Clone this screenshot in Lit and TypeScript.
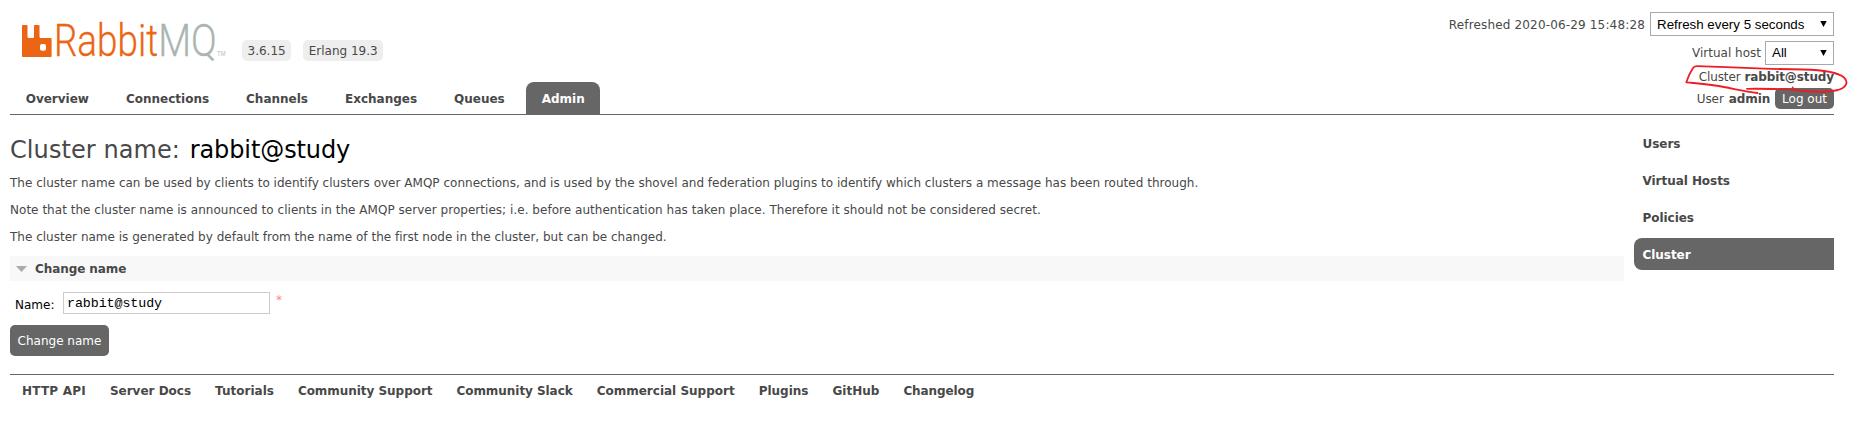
import { LitElement, html, css } from "lit";
import { customElement } from "lit/decorators.js";
import { classMap } from "lit/directives/class-map.js";

@customElement("rabbit-logo")
class RabbitLogo extends LitElement {
  static styles = css`
    :host { display: block; width: 206px; height: 40px; }
    svg { display: block; overflow: visible; }
    .word { font: 300 44px Roboto, sans-serif; fill: #eb6614; stroke: #eb6614; stroke-width: 0.3; }
    .mark { fill: #eb6614; }
    .mq { fill: #aab5b0; stroke: #aab5b0; }
    .tm { font: 7px "Liberation Sans", sans-serif; fill: #b4bdb9; }
  `;
  render() {
    return html`
      <svg width="206" height="40" viewBox="22 20 206 40">
        <path class="mark" fill-rule="evenodd"
          d="M22.800 25H26.700Q27.500 25 27.500 25.800V36.500Q27.500 38 29 38H32.500Q34 38 34 36.500V25.800Q34 25 34.800 25H38.700Q39.500 25 39.500 25.800V36.500Q39.500 38 41 38H50.800Q51.600 38 51.600 38.800V56.200Q51.600 57 50.800 57H22.800Q22 57 22 56.200V25.800Q22 25 22.800 25ZM42 44Q40 44 40 46V48.700Q40 50.700 42 50.700H44Q46 50.700 46 48.700V46Q46 44 44 44Z" />
        <text class="word" x="54" y="56" textLength="104" lengthAdjust="spacingAndGlyphs">Rabbit</text>
        <text class="word mq" x="158.300" y="56" textLength="58.500" lengthAdjust="spacingAndGlyphs">MQ</text>
        <text class="tm" x="217" y="56" textLength="8.500" lengthAdjust="spacingAndGlyphs">TM</text>
      </svg>`;
  }
}

@customElement("app-root")
class AppRoot extends LitElement {
  static styles = css`
    :host {
      display: block; height: 423px; padding: 0 30px 0 10px; box-sizing: border-box;
      background: #fff; color: #484848; overflow: hidden; position: relative;
      font: 12px/14px "DejaVu Sans", Verdana, sans-serif;
    }
    header { display: flex; justify-content: space-between; height: 114px; border-bottom: 1px solid #666; }
    .brand { display: flex; padding: 20px 0 0 12px; height: 62px; box-sizing: border-box; }
    .tag { height: 21px; line-height: 22px; margin-top: 20px; padding: 0 5.500px; background: #eee; border-radius: 5px; }
    .version { margin-left: 14px; }
    .erlang { margin-left: 12px; }
    .tabs { display: flex; gap: 5.600px; padding-top: 20px; font-weight: bold; }
    .tab { height: 32px; line-height: 34px; padding: 0 15.700px; border-radius: 8px 8px 0 0; }
    .on { background: #666; color: #fff; }

    .status { display: flex; flex-direction: column; align-items: flex-end; padding-top: 12px; }
    .row { display: flex; align-items: center; gap: 4px; }
    .refresh { height: 24px; gap: 5px; }
    .time { letter-spacing: 0.160px; padding-top: 1px; }
    .vhost { height: 25px; margin-top: 4px; }
    .cluster { height: 22px; padding-top: 1px; box-sizing: border-box; letter-spacing: -0.120px; }
    .user { height: 21px; margin-top: 1px; gap: 5px; letter-spacing: -0.100px; }
    .select {
      display: flex; align-items: center; justify-content: space-between; height: 24px; box-sizing: border-box;
      border: 1px solid #a9a9a9; padding: 0 6px 0 6px; color: #000;
      font: 13.330px "Liberation Sans", Arial, sans-serif;
    }
    .wide { width: 184px; }
    .narrow { width: 69px; }
    .arrow { width: 7px; height: 6px; display: block; }
    .logout { height: 21px; line-height: 22px; padding: 0 7px; border-radius: 5px; background: #666; color: #fff; letter-spacing: 0; }

    main { display: flex; gap: 10px; height: 259px; }
    .content { width: 1614px; }
    h1 { margin: 21px 0 12px; font-size: 24px; line-height: 28px; font-weight: normal; letter-spacing: 0.080px; }
    h1 b { font-weight: normal; color: #000; margin-left: 2px; letter-spacing: -0.100px; }
    p { margin: 0 0 13px; height: 14px; letter-spacing: 0.016px; white-space: nowrap; }
    p:nth-of-type(2) { letter-spacing: 0.032px; }
    p:nth-of-type(3) { letter-spacing: 0.010px; }
    .section {
      display: flex; align-items: center; gap: 8px; height: 25px; margin-top: -1px; padding-left: 6px;
      background: #f8f8f8; font-weight: bold; letter-spacing: -0.080px;
    }
    .tri { display: block; width: 11px; height: 6px; }
    .field { display: flex; margin-top: 11px; padding-left: 5px; color: #000; }
    .field label { width: 48px; padding-top: 6px; }
    .input {
      width: 207px; height: 22px; line-height: 21px; box-sizing: border-box; border: 1px solid #ccc; padding-left: 3px;
      font-family: "Liberation Mono", "Courier New", monospace; font-size: 13.330px; letter-spacing: -0.080px;
    }
    .req { color: #f88; margin: 1px 0 0 6px; }
    .button {
      display: inline-block; margin-top: 11px; height: 31px; line-height: 32px; padding: 0 7.600px;
      background: #666; color: #fff; border-radius: 5px;
    }

    .side { width: 200px; padding-top: 12px; font-weight: bold; letter-spacing: -0.050px; }
    .item { height: 32px; line-height: 34px; margin-bottom: 5px; padding-left: 8.500px; border-radius: 8px 0 0 8px; }

    footer { display: flex; gap: 24px; border-top: 1px solid #666; padding: 9px 0 0 12px; font-weight: bold; }
    footer a:nth-child(1) { letter-spacing: 0.210px; }
    footer a:nth-child(4) { letter-spacing: -0.040px; }
    footer a:nth-child(5) { letter-spacing: -0.050px; }
    footer a:nth-child(9) { letter-spacing: -0.100px; }

    .scribble { position: absolute; left: 1680px; top: 60px; fill: none; stroke: #ee1c25; stroke-width: 1.800; stroke-linecap: round; stroke-linejoin: round; }
  `;

  private tabs = ["Overview", "Connections", "Channels", "Exchanges", "Queues", "Admin"];
  private side = ["Users", "Virtual Hosts", "Policies", "Cluster"];
  private links = ["HTTP API", "Server Docs", "Tutorials", "Community Support", "Community Slack",
    "Commercial Support", "Plugins", "GitHub", "Changelog"];

  private arrow() {
    return html`<svg class="arrow" viewBox="0 0 7 6"><path d="M0.300 0H6.700L3.500 6Z" /></svg>`;
  }

  render() {
    return html`
      <header>
        <div>
          <div class="brand">
            <rabbit-logo></rabbit-logo>
            <span class="tag version">3.6.15</span>
            <span class="tag erlang">Erlang 19.3</span>
          </div>
          <nav class="tabs">
            ${this.tabs.map((t) => html`<a class=${classMap({ tab: true, on: t === "Admin" })}>${t}</a>`)}
          </nav>
        </div>
        <div class="status">
          <div class="row refresh"><span class="time">Refreshed 2020-06-29 15:48:28</span>
            <span class="select wide">Refresh every 5 seconds ${this.arrow()}</span></div>
          <div class="row vhost"><span>Virtual host</span><span class="select narrow">All ${this.arrow()}</span></div>
          <div class="row cluster"><span>Cluster</span><b>rabbit@study</b></div>
          <div class="row user"><span>User</span><b>admin</b><span class="logout">Log out</span></div>
        </div>
      </header>
      <main>
        <div class="content">
          <h1>Cluster name: <b>rabbit@study</b></h1>
          <p>The cluster name can be used by clients to identify clusters over AMQP connections, and is used by the shovel and federation plugins to identify which clusters a message has been routed through.</p>
          <p>Note that the cluster name is announced to clients in the AMQP server properties; i.e. before authentication has taken place. Therefore it should not be considered secret.</p>
          <p>The cluster name is generated by default from the name of the first node in the cluster, but can be changed.</p>
          <div class="section">
            <svg class="tri" viewBox="0 0 11 6"><path fill="#aaa" d="M0 0H11L5.500 6Z" /></svg>Change name
          </div>
          <div class="field"><label>Name:</label><div class="input">rabbit@study</div><span class="req">*</span></div>
          <div class="button">Change name</div>
        </div>
        <nav class="side">
          ${this.side.map((t) => html`<div class=${classMap({ item: true, on: t === "Cluster" })}>${t}</div>`)}
        </nav>
      </main>
      <footer>${this.links.map((t) => html`<a>${t}</a>`)}</footer>
      <svg class="scribble" width="175" height="40" viewBox="1680 60 175 40">
        <path d="M1757.500 93C1745 91.500 1735 89 1724 87C1712 84.500 1698 83.500 1686.300 82.300C1688 77 1691 71 1693 68Q1694.500 66 1698 66.200C1730 67.500 1765 69 1803 69.500C1825 70 1839 73 1844 77.500C1849 82 1846 88 1838 90C1829 92 1815 92 1803 91C1790 88.500 1765 88.700 1747 88.800M1792.700 87.500V88.300" />
      </svg>`;
  }
}
